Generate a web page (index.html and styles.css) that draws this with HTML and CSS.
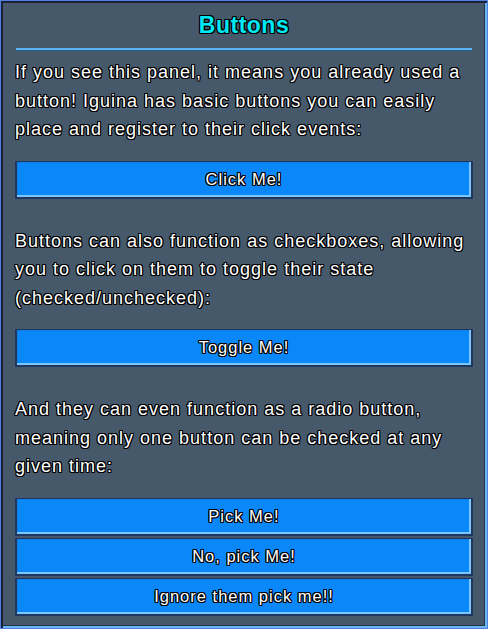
FILE: index.html
```html
<!doctype html>
<html lang="en">
<head>
<meta charset="utf-8" />
<title>Iguina: Buttons</title>
<meta name="viewport" content="width=device-width, initial-scale=1" />
<link rel="stylesheet" href="styles.css">
</head>
<body>
  <div class="panel">
    <!-- header -->
    <h1 class="title">Buttons</h1>
    <div class="rule"></div>

    <p class="para">If you see this panel, it means you already used a button! Iguina has basic buttons you can easily place and register to their click events:</p>
    <div class="buttons">
      <button class="btn">Click Me!</button>
    </div>

    <p class="para">Buttons can also function as checkboxes, allowing you to click on them to toggle their state (checked/unchecked):</p>
    <div class="buttons">
      <button class="btn">Toggle Me!</button>
    </div>

    <p class="para">And they can even function as a radio button, meaning only one button can be checked at any given time:</p>
    <div class="buttons group">
      <button class="btn">Pick Me!</button>
      <button class="btn">No, pick Me!</button>
      <button class="btn">Ignore them pick me!!</button>
    </div>
  </div>
</body>
</html>
```

FILE: styles.css
```css
:root{
  --bg      :#46596b;
  --btn     :#0a88fa;
  --btn-dark:#1d3760;
  --btn-hi  :#7cc6ff;
  --cyan    :#00e8f5;
  --outline :
    -1px -1px 0 #000, 0 -1px 0 #000, 1px -1px 0 #000,
    -1px  0   0 #000,                1px  0   0 #000,
    -1px  1px 0 #000, 0  1px 0 #000, 1px  1px 0 #000;
}

/* === base === */
*{margin:0;padding:0;box-sizing:border-box}
html,body{height:100%;overflow:hidden}
body{background:var(--bg);font-family:"Liberation Sans",Arial,sans-serif;}

/* === panel frame === */
.panel{
  height:100%;
  background:var(--bg);
  border:1px solid #4f7fe0;
  box-shadow:inset 2px 2px 0 #1b2238,inset -2px -2px 0 #6cb6f2,
             inset -3px -3px 0 #263148;
  padding:9px 14px 0 14px;
}

/* === title + rule === */
.title{
  font-size:23px;font-weight:700;line-height:30px;
  text-align:center;color:var(--cyan);letter-spacing:.5px;
  text-shadow:var(--outline);
}
.rule{
  height:3px;margin:8px 1px 0 1px;
  background:#5ab3f5;
  border-bottom:1px solid #2a5c8c;
}

/* === body text (margins collapse with .buttons) === */
.para{
  margin-top:7px;margin-bottom:17px;
  font-size:18px;line-height:28.5px;letter-spacing:1px;
  color:#fff;text-shadow:var(--outline);
}
.buttons{display:flex;flex-direction:column;gap:2px;margin-bottom:28px;}
.buttons.group{margin-bottom:0;}

/* === buttons === */
.btn{
  height:38px;width:100%;
  font-family:inherit;font-size:16.5px;letter-spacing:1px;
  color:#fff;text-shadow:var(--outline);
  background:var(--btn);
  border:1px solid var(--btn-dark);
  border-width:1px 2px 2px 2px;
  box-shadow:inset -2px -2px 0 var(--btn-hi),inset 0 0 0 1px #0b7ee8;
  cursor:pointer;
}
```
